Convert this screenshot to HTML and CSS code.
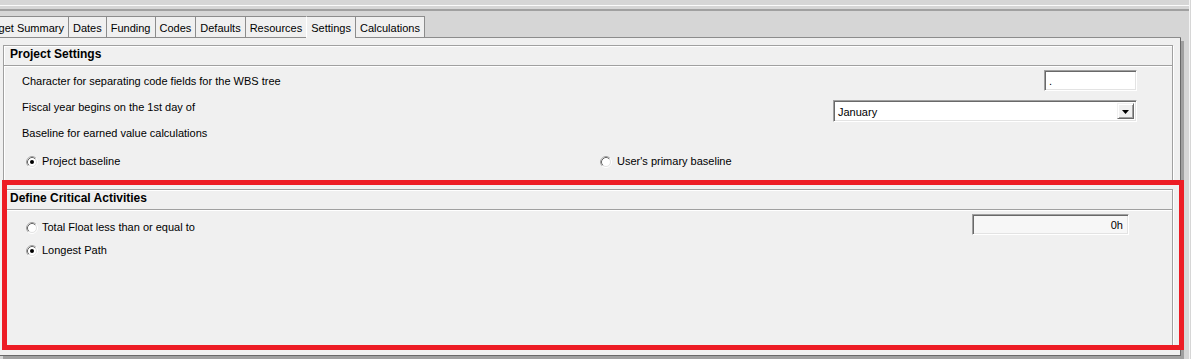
FILE: index.html
```html
<!DOCTYPE html>
<html>
<head>
<meta charset="utf-8">
<link rel="stylesheet" href="styles.css">
</head>
<body>
<div class="screen">
  <div class="topbar"><div class="hl"></div><div class="sl"></div></div>
  <div class="tabs">
    <div class="tab first">Budget Summary</div>
    <div class="tab">Dates</div>
    <div class="tab">Funding</div>
    <div class="tab">Codes</div>
    <div class="tab">Defaults</div>
    <div class="tab">Resources</div>
    <div class="tab active">Settings</div>
    <div class="tab last">Calculations</div>
    <div class="tabfill"></div>
  </div>
  <div class="panel">
    <section class="group g1">
      <div class="ghead">Project Settings</div>
      <div class="gbody">
        <div class="row r1">
          <span class="lbl l1">Character for separating code fields for the WBS tree</span>
          <div class="textbox">.</div>
        </div>
        <div class="row r2">
          <span class="lbl l2">Fiscal year begins on the 1st day of</span>
          <div class="select"><span class="seltext">January</span><span class="selbtn"><svg width="7" height="4" viewBox="0 0 7 4"><path d="M0 0H7L3.5 4Z" fill="#000"/></svg></span></div>
        </div>
        <div class="row r3">
          <span class="lbl">Baseline for earned value calculations</span>
        </div>
        <div class="radios r4">
          <div class="radio">
            <svg class="rb" width="12" height="12" viewBox="0 0 12 12"><circle cx="6" cy="6" r="5.5" fill="none" stroke="#fff"/><path d="M2.11 9.89A5.5 5.5 0 0 1 9.89 2.11" fill="none" stroke="#a0a0a0"/><circle cx="6" cy="6" r="4.5" fill="#fff" stroke="#e3e3e3"/><path d="M2.82 9.18A4.5 4.5 0 0 1 9.18 2.82" fill="none" stroke="#696969"/><circle cx="6" cy="6" r="2" fill="#000"/></svg>
            <span>Project baseline</span>
          </div>
          <div class="radio">
            <svg class="rb" width="12" height="12" viewBox="0 0 12 12"><circle cx="6" cy="6" r="5.5" fill="none" stroke="#fff"/><path d="M2.11 9.89A5.5 5.5 0 0 1 9.89 2.11" fill="none" stroke="#a0a0a0"/><circle cx="6" cy="6" r="4.5" fill="#fff" stroke="#e3e3e3"/><path d="M2.82 9.18A4.5 4.5 0 0 1 9.18 2.82" fill="none" stroke="#696969"/></svg>
            <span>User's primary baseline</span>
          </div>
        </div>
      </div>
    </section>
    <section class="group g2">
      <div class="ghead">Define Critical Activities</div>
      <div class="gbody">
        <div class="row c1">
          <div class="radio cr1">
            <svg class="rb" width="12" height="12" viewBox="0 0 12 12"><circle cx="6" cy="6" r="5.5" fill="none" stroke="#fff"/><path d="M2.11 9.89A5.5 5.5 0 0 1 9.89 2.11" fill="none" stroke="#a0a0a0"/><circle cx="6" cy="6" r="4.5" fill="#fff" stroke="#e3e3e3"/><path d="M2.82 9.18A4.5 4.5 0 0 1 9.18 2.82" fill="none" stroke="#696969"/></svg>
            <span>Total Float less than or equal to</span>
          </div>
          <div class="numbox">0h</div>
        </div>
        <div class="radio cr2">
          <svg class="rb" width="12" height="12" viewBox="0 0 12 12"><circle cx="6" cy="6" r="5.5" fill="none" stroke="#fff"/><path d="M2.11 9.89A5.5 5.5 0 0 1 9.89 2.11" fill="none" stroke="#a0a0a0"/><circle cx="6" cy="6" r="4.5" fill="#fff" stroke="#e3e3e3"/><path d="M2.82 9.18A4.5 4.5 0 0 1 9.18 2.82" fill="none" stroke="#696969"/><circle cx="6" cy="6" r="2" fill="#000"/></svg>
          <span>Longest Path</span>
        </div>
      </div>
    </section>
  </div>
  <div class="highlight"></div>
</div>
</body>
</html>
```
FILE: styles.css
```css
* { box-sizing: border-box; }
html, body { margin: 0; padding: 0; }
body {
  background: #d6d6d6;
  font-family: "Liberation Sans", Arial, sans-serif;
  font-size: 11px;
  color: #000;
}
.screen {
  position: relative;
  width: 1191px;
  height: 359px;
  overflow: hidden;
  background: #d6d6d6;
  box-shadow: inset -1px 0 0 #d6d6d6, inset -2px 0 0 #f4f4f4;
}
.topbar { height: 16px; padding-top: 5px; }
.topbar .hl { height: 1px; background: #fafafa; width: 1189px; }
.topbar .sl { margin-top: 3px; height: 2px; background: #a0a0a0; width: 1189px; }

.tabs {
  display: flex;
  width: 1181px;
  height: 22px;
}
.tab {
  height: 22px;
  padding: 3px 4px 0;
  line-height: 16px;
  background: #f0f0f0;
  border-top: 1px solid #8c8c8c;
  border-left: 1px solid #8c8c8c;
  border-bottom: 1px solid #8c8c8c;
  white-space: nowrap;
  flex: none;
}
.tab.first { margin-left: -26px; }
.tab.last { border-right: 1px solid #8c8c8c; }
.tab.active {
  border-left-color: #ffffff;
  border-bottom-color: #f0f0f0;
}
.tabfill {
  flex: 1;
  border-bottom: 1px solid #8c8c8c;
}

.panel {
  width: 1181px;
  height: 318px;
  background: #f0f0f0;
  border-right: 1px solid #696969;
  border-bottom: 1px solid #696969;
  box-shadow: 3px 3px 0 #a0a0a0;
  padding: 7px 0 0 3px;
}
.group { width: 1170px; }
.ghead {
  height: 21px;
  border: 1px solid #a0a0a0;
  box-shadow: inset 1px 1px 0 #fff, 1px 1px 0 #fff;
  padding-left: 6px;
  font-size: 12px;
  font-weight: bold;
  line-height: 17px;
}
.gbody {
  border-left: 1px solid #a0a0a0;
  border-right: 1px solid #a0a0a0;
  box-shadow: inset 1px 0 0 #fff, 1px 0 0 #fff;
  padding: 4px 35px 0 18px;
}
.g1 .gbody { height: 118px; }
.g2 { margin-top: 5px; }
.g2 .gbody { height: 140px; padding-left: 22px; }

.row {
  display: flex;
  justify-content: space-between;
  align-items: flex-start;
}
.lbl { line-height: 13px; white-space: nowrap; }
.r1 { height: 21px; }
.l1 { margin-top: 5px; }
.r2 { margin-top: 9px; height: 22px; }
.l2 { margin-top: 1px; }
.r3 { margin-top: 5px; }

.textbox, .select, .numbox {
  border-top: 1px solid #a0a0a0;
  border-left: 1px solid #a0a0a0;
  border-bottom: 1px solid #fff;
  border-right: 1px solid #fff;
  box-shadow: inset 1px 1px 0 #696969, inset -1px -1px 0 #e3e3e3;
  background: #fff;
}
.textbox {
  width: 93px;
  height: 21px;
  padding: 2px 0 0 4px;
  line-height: 16px;
}
.select {
  width: 304px;
  height: 22px;
  padding: 2px;
  display: flex;
  align-items: stretch;
}
.seltext { flex: 1; padding-left: 2px; line-height: 18px; }
.selbtn {
  width: 17px;
  background: #f0f0f0;
  border-top: 1px solid #f0f0f0;
  border-left: 1px solid #f0f0f0;
  border-right: 1px solid #696969;
  border-bottom: 1px solid #696969;
  box-shadow: inset 1px 1px 0 #fff, inset -1px -1px 0 #a0a0a0;
  display: flex;
  align-items: center;
  justify-content: center;
}
.selbtn svg { display: block; margin-top: 1px; }

.radios {
  margin-top: 15px;
  padding-left: 4px;
  display: grid;
  grid-template-columns: 574px 1fr;
}
.radio {
  display: flex;
  align-items: center;
  height: 13px;
  line-height: 13px;
  gap: 4px;
  white-space: nowrap;
}
.radio + .radio { gap: 5px; }
.rb { display: block; flex: none; }

.c1 { height: 21px; padding-right: 8px; }
.cr1 { margin-top: 7px; }
.cr2 { margin-top: 9px; }
.numbox {
  width: 157px;
  height: 21px;
  background: #f7f7f7;
  text-align: right;
  padding: 2px 5px 0 0;
  line-height: 17px;
}

.highlight {
  position: absolute;
  left: 2px;
  top: 180px;
  width: 1182px;
  height: 170px;
  border: 5px solid #ed1c24;
  pointer-events: none;
}
```
